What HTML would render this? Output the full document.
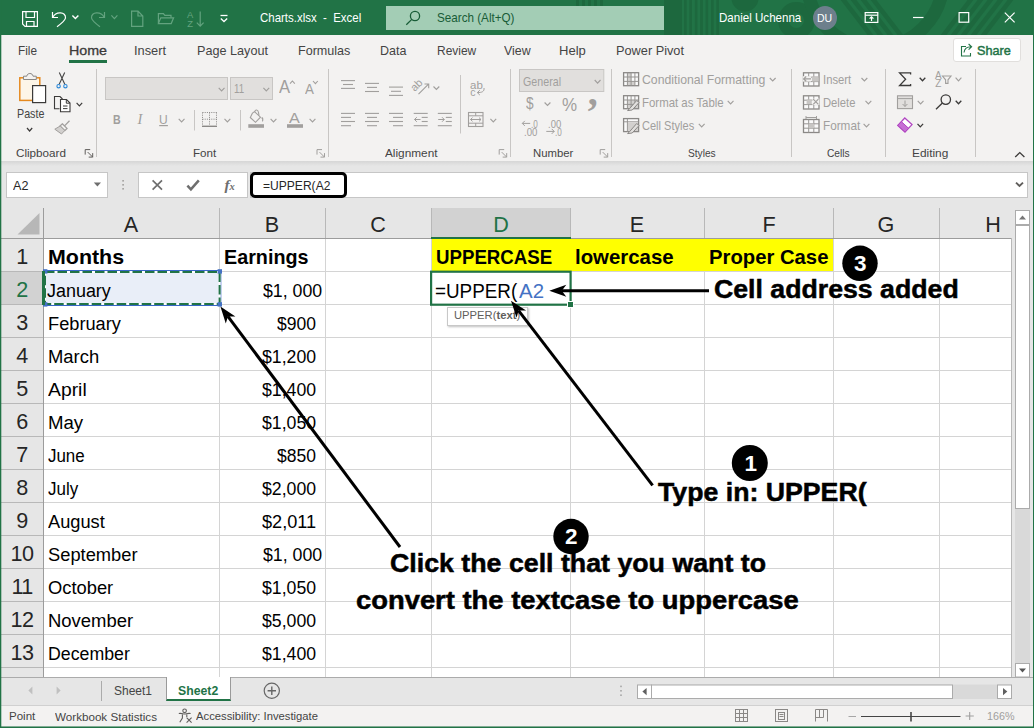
<!DOCTYPE html>
<html lang="en"><head><meta charset="utf-8"><title>Charts.xlsx - Excel</title>
<style>
html,body{margin:0;padding:0;background:#fff;}
body{width:1034px;height:728px;overflow:hidden;font-family:"Liberation Sans",sans-serif;}
#app{position:relative;width:1034px;height:728px;overflow:hidden;background:#f3f2f1;}
.t{position:absolute;white-space:nowrap;line-height:1;display:block;}
.ov{position:absolute;left:0;top:0;overflow:visible;pointer-events:none;}
.titlebar{position:absolute;left:0;top:0;width:1034px;height:35px;background:#217346;}
.search{position:absolute;left:386px;top:6px;width:278px;height:24px;background:#a3cdb5;}
.avatar{position:absolute;left:813px;top:6px;width:24px;height:24px;border-radius:50%;background:#6d7f8c;}
.tabs{position:absolute;left:0;top:0;width:1034px;height:0;}
.homeul{position:absolute;left:69px;top:60px;width:38px;height:3px;background:#217346;}
.share{position:absolute;left:953px;top:38px;width:66px;height:22px;background:#fff;border:1px solid #e1dfdd;border-radius:3px;}
.ribbon{position:absolute;left:0;top:0;width:1034px;height:0;}
.shadow{position:absolute;left:0;top:161px;width:1034px;height:5px;background:linear-gradient(#d6d6d6,#e6e6e6);}
.fbarbg{position:absolute;left:0;top:166px;width:1034px;height:42px;background:#e6e6e6;}
.fbar{position:absolute;left:0;top:0;width:1034px;height:0;}
.namebox{position:absolute;left:6px;top:172px;width:100px;height:24px;background:#fff;border:1px solid #c6c6c6;box-sizing:content-box;}
.fbtns{position:absolute;left:138px;top:172px;width:108px;height:24px;background:#fff;border:1px solid #c6c6c6;}
.finput{position:absolute;left:250px;top:172px;width:776px;height:24px;background:#fff;border:1px solid #c6c6c6;}
.fblack{position:absolute;left:250px;top:172px;width:91px;height:20px;background:#fff;border:3px solid #000;border-radius:5px;}
.grid{position:absolute;left:0;top:0;width:1034px;height:0;}
.tip{position:absolute;left:447px;top:307px;width:79px;height:17px;background:#fff;border:1px solid #c8c8c8;box-shadow:1px 1px 2px rgba(0,0,0,.25);}
.sheetbg{position:absolute;left:0;top:677px;width:1034px;height:28px;background:#e6e6e6;border-top:1px solid #ababab;box-sizing:border-box;}
.sheetbar{position:absolute;left:0;top:0;width:1034px;height:0;}
.tab2{position:absolute;left:166px;top:677px;width:63px;height:22px;background:#fff;border-left:1px solid #9a9a9a;border-right:1px solid #9a9a9a;border-bottom:2.5px solid #217346;}
.statusbg{position:absolute;left:0;top:705px;width:1034px;height:23px;background:#f3f2f1;border-top:1px solid #d0d0d0;box-sizing:border-box;}
.status{position:absolute;left:0;top:0;width:1034px;height:0;}
.anno{position:absolute;left:0;top:0;width:1034px;height:0;}
.an{-webkit-text-stroke:0.5px #000;}
.frame{position:absolute;left:0;top:0;width:1032px;height:727px;border:1px solid #217346;border-top:none;pointer-events:none;box-shadow:inset 0 -1px 0 rgba(33,115,70,.55), inset 1px 0 0 rgba(33,115,70,.3);}
</style></head>
<body><div id="app">
<div class="titlebar">
<svg class="ov" style="overflow:hidden" width="1034" height="35" viewBox="0 0 1034 35">
<g fill="#1d683e">
<rect x="664" y="0" width="18" height="35"/>
<rect x="684" y="0" width="2.6" height="35"/><rect x="689.4" y="0" width="2.6" height="35"/><rect x="694.8" y="0" width="2.6" height="35"/><rect x="700.2" y="0" width="2.6" height="35"/><rect x="705.6" y="0" width="2.6" height="35"/><rect x="711" y="0" width="2.6" height="35"/><rect x="716.4" y="0" width="2.6" height="35"/>
<rect x="576" y="0" width="3" height="6"/><rect x="582" y="0" width="3" height="6"/><rect x="588" y="0" width="3" height="6"/><rect x="594" y="0" width="3" height="6"/><rect x="600" y="0" width="3" height="6"/>
<circle cx="745" cy="-2" r="13.6"/>
</g>
<g fill="none" stroke="#1d683e">
<circle cx="796.4" cy="20.4" r="13" stroke-width="10.7"/>
<circle cx="875" cy="-20" r="68" stroke-width="13"/>
<path d="M842 -2 L872 37 M852 -2 L882 37 M862 -2 L892 37 M872 -2 L902 37" stroke-width="4.6"/>
<path d="M972 -2 L942 37 M982 -2 L952 37 M992 -2 L962 37 M1002 -2 L972 37 M1012 -2 L982 37" stroke-width="4.6"/>
</g>
</svg>
<div class="search"></div>
<div class="avatar"></div>
<svg class="ov" width="1034" height="35" viewBox="0 0 1034 35" fill="none" stroke-linejoin="miter">
<g stroke="#ffffff" stroke-width="1.2">
<path d="M22.6 11.6 H37.4 V26.4 H25 L22.6 24 Z"/>
<path d="M26 11.6 V17.5 H34.5 V11.6"/>
<path d="M26.5 26.4 V21.5 H34 V26.4"/>
<path d="M52.5 12 V17.5 H58"/>
<path d="M52.8 17.2 C56 11 66 11.5 65.5 18 C65.3 20.5 62 23 57 26.8"/>
</g>
<path d="M72.4 15.4 L75.4 18.6 L78.4 15.4" fill="none" stroke="#ffffff" stroke-width="1.4"/>
<g stroke="#63a37f" stroke-width="1.2">
<path d="M104.5 12 V17.5 H99"/>
<path d="M104.2 17.2 C101 11 91 11.5 91.5 18 C91.7 20.5 95 23 100 26.8"/>
<path d="M131.6 11.2 H138 L142.8 16 V26.4 H131.6 Z M138 11.2 V16 H142.8"/>
<path d="M158.4 23 V13.6 H163.4 L164.8 15.4 H171 V17.6"/>
<path d="M158.4 23.6 L160.8 17.8 H173.6 L171.2 23.6 Z"/>
<path d="M200.2 11.4 V26 M196.8 22.6 L200.2 26.2 L203.6 22.6"/>
</g>
<path d="M111.4 15.4 L114.4 18.6 L117.4 15.4" fill="none" stroke="#63a37f" stroke-width="1.2"/>
<path d="M220.5 15.5 H227.5" stroke="#ffffff" stroke-width="1.3"/>
<path d="M220.8 18.5 L224 21.5 L227.2 18.5" stroke="#ffffff" stroke-width="1.3"/>
<circle cx="415" cy="16" r="4.6" stroke="#185c37" stroke-width="1.3"/>
<path d="M411.8 19.4 L406.3 24.8" stroke="#185c37" stroke-width="1.3"/>
<g stroke="#ffffff" stroke-width="1.2">
<rect x="865.2" y="12.6" width="12.6" height="9.8"/>
<path d="M865.2 15.2 H877.8" />
<path d="M871.5 21 V17 M869.6 18.6 L871.5 16.8 L873.4 18.6"/>
<path d="M913 17.5 H923.5"/>
<rect x="959.1" y="12.6" width="9.6" height="9.6"/>
<path d="M1004.8 12.6 L1014.6 22.4 M1014.6 12.6 L1004.8 22.4"/>
</g>
</svg>
<span id="t1" class="t" style="top:10.34px;font-size:9.4px;color:#63a37f;left:187.00px;transform-origin:0 50%;">A</span>
<span id="t2" class="t" style="top:19.14px;font-size:9.4px;color:#63a37f;left:187.30px;transform-origin:0 50%;">Z</span>
<span id="t3" class="t" style="top:11.95px;font-size:12.7px;color:#fff;left:259.80px;transform-origin:0 50%;transform:scaleX(0.9028);">Charts.xlsx&nbsp; -&nbsp; Excel</span>
<span id="t4" class="t" style="top:11.95px;font-size:12.7px;color:#185c37;left:436.50px;transform-origin:0 50%;transform:scaleX(0.9197);">Search (Alt+Q)</span>
<span id="t5" class="t" style="top:11.95px;font-size:12.7px;color:#fff;left:719.30px;transform-origin:0 50%;transform:scaleX(0.9116);">Daniel Uchenna</span>
<span id="t6" class="t" style="top:13.22px;font-size:11.2px;color:#fff;left:817.20px;transform-origin:0 50%;transform:scaleX(0.9399);">DU</span>
</div>
<div class="tabs">
<span id="t7" class="t" style="top:44.75px;font-size:12.7px;color:#444444;left:18.00px;transform-origin:0 50%;transform:scaleX(0.9290);">File</span>
<span id="t8" class="t" style="top:44.75px;font-size:12.7px;color:#444444;left:134.00px;transform-origin:0 50%;transform:scaleX(1.0084);">Insert</span>
<span id="t9" class="t" style="top:44.75px;font-size:12.7px;color:#444444;left:197.00px;transform-origin:0 50%;transform:scaleX(0.9965);">Page Layout</span>
<span id="t10" class="t" style="top:44.75px;font-size:12.7px;color:#444444;left:298.00px;transform-origin:0 50%;transform:scaleX(0.9910);">Formulas</span>
<span id="t11" class="t" style="top:44.75px;font-size:12.7px;color:#444444;left:380.30px;transform-origin:0 50%;transform:scaleX(0.9846);">Data</span>
<span id="t12" class="t" style="top:44.75px;font-size:12.7px;color:#444444;left:436.50px;transform-origin:0 50%;transform:scaleX(0.9421);">Review</span>
<span id="t13" class="t" style="top:44.75px;font-size:12.7px;color:#444444;left:504.40px;transform-origin:0 50%;transform:scaleX(0.9750);">View</span>
<span id="t14" class="t" style="top:44.75px;font-size:12.7px;color:#444444;left:558.80px;transform-origin:0 50%;transform:scaleX(1.0271);">Help</span>
<span id="t15" class="t" style="top:44.75px;font-size:12.7px;color:#444444;left:616.00px;transform-origin:0 50%;transform:scaleX(1.0044);">Power Pivot</span>
<span id="t16" class="t" style="top:44.58px;font-size:12.9px;color:#3b3a39;left:69.00px;transform-origin:0 50%;transform:scaleX(1.1050);-webkit-text-stroke:0.3px #3b3a39;">Home</span>
<div class="homeul"></div>
<div class="share"></div>
<svg class="ov" style="top:0" width="1034" height="70" viewBox="0 0 1034 70" fill="none" stroke="#217346" stroke-width="1.1">
<path d="M966 46.5 H961.5 V56 H970.5 V53"/>
<path d="M964 52.5 C964.5 48.5 967 46.8 971 46.8 M968.6 44 L971.6 46.8 L968.6 49.6"/>
</svg>
<span id="t17" class="t" style="top:44.75px;font-size:12.7px;color:#217346;left:977.00px;transform-origin:0 50%;transform:scaleX(0.9982);-webkit-text-stroke:0.45px #217346;">Share</span>
</div>
<div class="ribbon">
<svg class="ov" style="top:0" width="1034" height="170" viewBox="0 0 1034 170"><path d="M96.5 69 V157" stroke="#c8c6c4" stroke-width="1"/>
<path d="M328.5 69 V157" stroke="#c8c6c4" stroke-width="1"/>
<path d="M510.5 69 V157" stroke="#c8c6c4" stroke-width="1"/>
<path d="M611.5 69 V157" stroke="#c8c6c4" stroke-width="1"/>
<path d="M791.5 69 V157" stroke="#c8c6c4" stroke-width="1"/>
<path d="M885.5 69 V157" stroke="#c8c6c4" stroke-width="1"/>
<path d="M975.5 69 V157" stroke="#c8c6c4" stroke-width="1"/>
<path d="M460.5 75 V133.5" stroke="#c8c6c4"/>
<path d="M194.5 110 V130.5 M240.5 110 V130.5" stroke="#c8c6c4"/>
<rect x="19.8" y="77.8" width="20" height="22.6" fill="#fdf6e8" stroke="#e5891f" stroke-width="1.5"/>
<path d="M23.5 79.5 V76.2 H26.8 C27 72.6 32.8 72.6 33 76.2 H36.3 V79.5 Z" fill="#f3f2f1" stroke="#8a8886" stroke-width="1"/>
<rect x="32.6" y="85.6" width="13" height="17" fill="#fff" stroke="#3b3a39" stroke-width="1.2"/>
<path d="M27.0 128.0 L29.6 131.0 L32.2 128.0" fill="none" stroke="#3b3a39" stroke-width="1.2"/>
<path d="M59.3 72.5 L64.8 84.3 M64.7 72.5 L59.2 84.3" stroke="#444" stroke-width="1.1" fill="none"/>
<circle cx="58.6" cy="86.2" r="1.7" fill="none" stroke="#2b88d8" stroke-width="1.1"/><circle cx="65.4" cy="86.2" r="1.7" fill="none" stroke="#2b88d8" stroke-width="1.1"/>
<path d="M59.5 108.8 H54.5 V96.5 H60 L62.5 99" fill="none" stroke="#3b3a39" stroke-width="1.1"/>
<path d="M60.5 99.5 H66.5 L70 103 V111.8 H60.5 Z" fill="#fff" stroke="#3b3a39" stroke-width="1.1"/>
<path d="M66.3 99.8 V103.2 H69.8 M63 106 H67.5 M63 108.6 H67.5" fill="none" stroke="#3b3a39" stroke-width="1"/>
<path d="M76.6 102.9 L79.4 105.9 L82.2 102.9" fill="none" stroke="#3b3a39" stroke-width="1.2"/>
<path d="M69.5 120.8 L64.8 125.6 M62.3 123.8 L67 128.4 L64.8 130.6 L60 126 Z" fill="none" stroke="#a19f9d" stroke-width="1.3"/>
<path d="M60.2 126 L54.8 129.2 L61.5 134 L64.8 130.4 Z" fill="#d2d0ce" stroke="#a19f9d" stroke-width="1"/>
<path d="M85.2 154.6 V149.6 H90.2" fill="none" stroke="#605e5c" stroke-width="1"/><path d="M87.7 152.1 L92.7 157.1 M92.7 153.1 V157.1 H88.7" fill="none" stroke="#605e5c" stroke-width="1"/>
<rect x="105.5" y="77.5" width="122" height="22" fill="#e1dfdd" stroke="#c8c6c4"/>
<rect x="230.5" y="77.5" width="42" height="22" fill="#e1dfdd" stroke="#c8c6c4"/>
<path d="M218.7 87.8 L221.6 90.8 L224.5 87.8" fill="none" stroke="#a19f9d" stroke-width="1.15"/>
<path d="M263.4 87.8 L266.3 90.8 L269.2 87.8" fill="none" stroke="#a19f9d" stroke-width="1.15"/>
<path d="M290 83.6 L292.4 81 L294.8 83.6" fill="none" stroke="#a19f9d" stroke-width="1.1"/>
<path d="M313 81 L315.4 83.6 L317.8 81" fill="none" stroke="#a19f9d" stroke-width="1.1"/>
<path d="M159.2 125.6 H167.9" stroke="#a19f9d" stroke-width="1.2"/>
<path d="M178.7 118.8 L181.6 121.8 L184.5 118.8" fill="none" stroke="#a19f9d" stroke-width="1.15"/>
<path d="M224.5 118.8 L227.4 121.8 L230.3 118.8" fill="none" stroke="#a19f9d" stroke-width="1.15"/>
<path d="M270.6 118.8 L273.5 121.8 L276.4 118.8" fill="none" stroke="#a19f9d" stroke-width="1.15"/>
<path d="M309.6 118.8 L312.5 121.8 L315.4 118.8" fill="none" stroke="#a19f9d" stroke-width="1.15"/>
<path d="M202.5 112.5 H217 M202.5 119.2 H217 M202.5 112.5 V125 M216.5 112.5 V125 M209.5 112.5 V125" fill="none" stroke="#8a8886" stroke-width="1" stroke-dasharray="1 1.2"/>
<path d="M202 126.3 H217" stroke="#8a8886" stroke-width="1.4"/>
<path d="M252.5 113 L250.3 117.5 L255.5 122.3 L260.5 117.2 L254.5 111.6 Z" fill="none" stroke="#a19f9d" stroke-width="1.1"/>
<path d="M254.6 111.8 C255.5 109 258 109.5 258.5 112.5 L259 115.6" fill="none" stroke="#a19f9d" stroke-width="1.1"/>
<path d="M261.6 118.5 C262.8 116 263 120.5 262.4 121.4" fill="none" stroke="#a19f9d" stroke-width="1.2"/>
<rect x="248.3" y="124.2" width="15.7" height="3.6" fill="#a19f9d"/>
<rect x="287" y="124.2" width="16" height="3.6" fill="#a19f9d"/>
<path d="M317 154.6 V149.6 H322" fill="none" stroke="#a19f9d" stroke-width="1"/><path d="M319.5 152.1 L324.5 157.1 M324.5 153.1 V157.1 H320.5" fill="none" stroke="#a19f9d" stroke-width="1"/>
<path d="M341 80.6 H355" stroke="#a19f9d" stroke-width="1.1"/><path d="M343 84.5 H353" stroke="#a19f9d" stroke-width="1.1"/><path d="M341 88.4 H355" stroke="#a19f9d" stroke-width="1.1"/>
<path d="M365 83.4 H379" stroke="#a19f9d" stroke-width="1.1"/><path d="M367 87.4 H377" stroke="#a19f9d" stroke-width="1.1"/><path d="M365 91.5 H379" stroke="#a19f9d" stroke-width="1.1"/>
<path d="M389 87.1 H403" stroke="#a19f9d" stroke-width="1.1"/><path d="M391 91.3 H401" stroke="#a19f9d" stroke-width="1.1"/><path d="M389 95.4 H403" stroke="#a19f9d" stroke-width="1.1"/>
<path d="M341 113.4 H355" stroke="#a19f9d" stroke-width="1.1"/><path d="M341 117.4 H351" stroke="#a19f9d" stroke-width="1.1"/><path d="M341 121.5 H355" stroke="#a19f9d" stroke-width="1.1"/><path d="M341 125.7 H351" stroke="#a19f9d" stroke-width="1.1"/>
<path d="M365 113.4 H379" stroke="#a19f9d" stroke-width="1.1"/><path d="M367 117.4 H377" stroke="#a19f9d" stroke-width="1.1"/><path d="M365 121.5 H379" stroke="#a19f9d" stroke-width="1.1"/><path d="M367 125.7 H377" stroke="#a19f9d" stroke-width="1.1"/>
<path d="M389 113.4 H403" stroke="#a19f9d" stroke-width="1.1"/><path d="M393 117.4 H403" stroke="#a19f9d" stroke-width="1.1"/><path d="M389 121.5 H403" stroke="#a19f9d" stroke-width="1.1"/><path d="M393 125.7 H403" stroke="#a19f9d" stroke-width="1.1"/>
<path d="M413.7 113.4 H427.7" stroke="#a19f9d" stroke-width="1.1"/><path d="M421.7 117.4 H427.7" stroke="#a19f9d" stroke-width="1.1"/><path d="M421.7 121.5 H427.7" stroke="#a19f9d" stroke-width="1.1"/><path d="M413.7 125.7 H427.7" stroke="#a19f9d" stroke-width="1.1"/>
<path d="M414.5 119.5 H420.5 M416.8 117.2 L414.5 119.5 L416.8 121.8" fill="none" stroke="#a19f9d" stroke-width="1"/>
<path d="M437.8 113.4 H451.8" stroke="#a19f9d" stroke-width="1.1"/><path d="M445.8 117.4 H451.8" stroke="#a19f9d" stroke-width="1.1"/><path d="M445.8 121.5 H451.8" stroke="#a19f9d" stroke-width="1.1"/><path d="M437.8 125.7 H451.8" stroke="#a19f9d" stroke-width="1.1"/>
<path d="M438.2 119.5 H444.2 M442 117.2 L444.3 119.5 L442 121.8" fill="none" stroke="#a19f9d" stroke-width="1"/>
<path d="M418.5 94.2 L428.5 84.2 M424.5 84 H428.7 V88.2" fill="none" stroke="#a19f9d" stroke-width="1.1"/>
<path d="M433.5 86.5 L436.4 89.5 L439.3 86.5" fill="none" stroke="#a19f9d" stroke-width="1.15"/>
<path d="M484 88 C484.5 91.5 482 92.6 477.5 92.6 M479.8 90.2 L477.3 92.6 L479.8 95" fill="none" stroke="#a19f9d" stroke-width="1"/>
<rect x="468.5" y="112.5" width="14.5" height="14" fill="none" stroke="#a19f9d" stroke-width="1.1"/>
<path d="M468.5 115.8 H483 M468.5 123.2 H483 M475.7 112.5 V115.8 M475.7 123.2 V126.5 M470.5 119.5 H481 M472.5 117.6 L470.5 119.5 L472.5 121.4 M479 117.6 L481 119.5 L479 121.4" fill="none" stroke="#a19f9d" stroke-width="1"/>
<path d="M490.4 118.8 L493.3 121.8 L496.2 118.8" fill="none" stroke="#a19f9d" stroke-width="1.15"/>
<path d="M499.2 154.6 V149.6 H504.2" fill="none" stroke="#a19f9d" stroke-width="1"/><path d="M501.7 152.1 L506.7 157.1 M506.7 153.1 V157.1 H502.7" fill="none" stroke="#a19f9d" stroke-width="1"/>
<rect x="519.5" y="69.5" width="84.3" height="22" fill="#e1dfdd" stroke="#c8c6c4"/>
<path d="M594.7 80.0 L597.6 83.1 L600.5 80.0" fill="none" stroke="#a19f9d" stroke-width="1.15"/>
<path d="M544.6 102.5 L547.5 105.5 L550.4 102.5" fill="none" stroke="#a19f9d" stroke-width="1.15"/>
<path d="M530.2 123.4 H522.3 M524.8 120.9 L522.3 123.4 L524.8 125.9" fill="none" stroke="#a19f9d" stroke-width="1"/>
<path d="M546.3 131.4 H554.2 M551.7 128.9 L554.2 131.4 L551.7 133.9" fill="none" stroke="#a19f9d" stroke-width="1"/>
<path d="M600.2 154.6 V149.6 H605.2" fill="none" stroke="#a19f9d" stroke-width="1"/><path d="M602.7 152.1 L607.7 157.1 M607.7 153.1 V157.1 H603.7" fill="none" stroke="#a19f9d" stroke-width="1"/>
<rect x="623.6" y="72.7" width="15" height="13" fill="#fafafa"/>
<rect x="627.4" y="72.7" width="3.8" height="8.7" fill="#d2d0ce"/><rect x="627.4" y="81.4" width="7.5" height="4.3" fill="#d2d0ce"/>
<rect x="623.6" y="72.7" width="15" height="13" fill="none" stroke="#8a8886" stroke-width="1.3"/><path d="M623.6 77.0 H638.6 M623.6 81.4 H638.6 M627.4 72.7 V85.7 M631.1 72.7 V85.7 M634.9 72.7 V85.7 " stroke="#979593" stroke-width="1" fill="none"/>
<rect x="623.6" y="95.7" width="15" height="13" fill="#fafafa"/>
<rect x="627.4" y="100" width="11" height="8.6" fill="#d2d0ce"/>
<rect x="623.6" y="95.7" width="15" height="13" fill="none" stroke="#8a8886" stroke-width="1.3"/><path d="M623.6 100.0 H638.6 M623.6 104.4 H638.6 M627.4 95.7 V108.7 M631.1 95.7 V108.7 M634.9 95.7 V108.7 " stroke="#979593" stroke-width="1" fill="none"/>
<path d="M629.6 108.6 L636.6 100.6 L639.2 102.4 L632.2 110 L627.6 110.6 Z" fill="#e1dfdd" stroke="#8a8886" stroke-width="1"/>
<rect x="623.6" y="118.6" width="15" height="13" fill="#fafafa" stroke="#8a8886" stroke-width="1.3"/><path d="M623.6 121.8 H638.6 M627.4 118.6 V131.6" stroke="#979593" fill="none"/><rect x="628" y="122.4" width="10" height="8.6" fill="#d2d0ce"/>
<path d="M629.6 131.6 L636.6 123.6 L639.2 125.4 L632.2 133 L627.6 133.6 Z" fill="#e1dfdd" stroke="#8a8886" stroke-width="1"/>
<path d="M769.8 78.0 L772.7 81.0 L775.6 78.0" fill="none" stroke="#a19f9d" stroke-width="1.15"/>
<path d="M727.7 100.8 L730.6 103.8 L733.5 100.8" fill="none" stroke="#a19f9d" stroke-width="1.15"/>
<path d="M698.8 123.9 L701.7 127.0 L704.6 123.9" fill="none" stroke="#a19f9d" stroke-width="1.15"/>
<rect x="803.5" y="72.8" width="15.5" height="13.2" fill="#fafafa" stroke="#8a8886" stroke-width="1.3"/><path d="M803.5 77.2 H819.0 M803.5 81.6 H819.0 M808.7 72.8 V86.0 M813.8 72.8 V86.0 " stroke="#979593" stroke-width="1" fill="none"/>
<rect x="811.8" y="76.4" width="6.8" height="5.2" fill="#c8c6c4"/><rect x="803" y="76.2" width="8" height="5.4" fill="#f3f2f1"/><path d="M811 78.9 H803.6 M806.2 76.5 L803.6 78.9 L806.2 81.3" stroke="#a19f9d" stroke-width="1.2" fill="none"/>
<rect x="803.5" y="95.8" width="15.5" height="13.2" fill="#fafafa" stroke="#8a8886" stroke-width="1.3"/><path d="M803.5 100.2 H819.0 M803.5 104.6 H819.0 M808.7 95.8 V109.0 M813.8 95.8 V109.0 " stroke="#979593" stroke-width="1" fill="none"/>
<rect x="806.6" y="99.4" width="5.2" height="4.8" fill="#c8c6c4"/><rect x="812.4" y="98.6" width="7" height="6.4" fill="#f3f2f1"/><path d="M813.2 99.2 L818.4 104.4 M818.4 99.2 L813.2 104.4" stroke="#a19f9d" stroke-width="1.2" fill="none"/>
<rect x="803.5" y="119.5" width="15.5" height="13" fill="#fafafa" stroke="#8a8886" stroke-width="1.3"/><path d="M803.5 123.8 H819.0 M803.5 128.2 H819.0 M808.7 119.5 V132.5 M813.8 119.5 V132.5 " stroke="#979593" stroke-width="1" fill="none"/>
<rect x="808.6" y="123.6" width="5.4" height="4.6" fill="#c8c6c4"/><path d="M806 117.5 H816.5 M806 116 V119 M816.5 116 V119" stroke="#a19f9d" fill="none"/>
<path d="M861.5 78.0 L864.4 81.0 L867.3 78.0" fill="none" stroke="#a19f9d" stroke-width="1.15"/>
<path d="M865.5 100.8 L868.4 103.8 L871.3 100.8" fill="none" stroke="#a19f9d" stroke-width="1.15"/>
<path d="M863.6 123.9 L866.5 127.0 L869.4 123.9" fill="none" stroke="#a19f9d" stroke-width="1.15"/>
<path d="M910.6 74.5 V72.9 H899.6 L905.6 79.2 L899.6 85.5 H910.6 V83.9" fill="none" stroke="#3b3a39" stroke-width="1.3"/>
<path d="M919.7 77.7 L922.5 80.7 L925.3 77.7" fill="none" stroke="#3b3a39" stroke-width="1.3"/>
<rect x="897.5" y="95.8" width="15" height="12.8" fill="#e1dfdd" stroke="#a19f9d" stroke-width="1.1"/><path d="M897.5 98.6 H912.5 M905 100.5 V106.4 M902.6 104 L905 106.5 L907.4 104" stroke="#a19f9d" fill="none"/>
<path d="M917.7 100.8 L920.6 103.8 L923.5 100.8" fill="none" stroke="#a19f9d" stroke-width="1.15"/>
<path d="M904.8 118 L912 124.6 L905 132 L897.8 125.4 Z" fill="#fff" stroke="#b146c2" stroke-width="1.3"/>
<path d="M901.3 121.6 L908.6 128.3 L905 132 L897.8 125.4 Z" fill="#c66fd4" stroke="#b146c2" stroke-width="1"/>
<path d="M917.5 123.9 L920.3 126.9 L923.1 123.9" fill="none" stroke="#3b3a39" stroke-width="1.3"/>
<path d="M942.5 76 H951 L948 79.8 V83.4 H945.6 V79.8 Z" fill="none" stroke="#a19f9d" stroke-width="1.1"/>
<path d="M955.6 77.7 L958.5 80.8 L961.4 77.7" fill="none" stroke="#a19f9d" stroke-width="1.15"/>
<circle cx="945.8" cy="99.6" r="4.7" fill="none" stroke="#3b3a39" stroke-width="1.3"/><path d="M942.4 103 L936 109.2" stroke="#3b3a39" stroke-width="1.3"/>
<path d="M955.7 100.8 L958.5 103.8 L961.3 100.8" fill="none" stroke="#3b3a39" stroke-width="1.3"/>
<path d="M1015.2 157 L1019.8 152.6 L1024.4 157" fill="none" stroke="#3b3a39" stroke-width="1.3"/></svg>
<span id="t18" class="t" style="top:108.07px;font-size:12.2px;color:#444444;left:16.60px;transform-origin:0 50%;transform:scaleX(0.8790);">Paste</span>
<span id="t19" class="t" style="top:148.42px;font-size:11.2px;color:#444444;left:15.60px;transform-origin:0 50%;transform:scaleX(1.0440);">Clipboard</span>
<span id="t20" class="t" style="top:148.42px;font-size:11.2px;color:#444444;left:192.80px;transform-origin:0 50%;transform:scaleX(1.0361);">Font</span>
<span id="t21" class="t" style="top:148.42px;font-size:11.2px;color:#444444;left:385.30px;transform-origin:0 50%;transform:scaleX(1.0553);">Alignment</span>
<span id="t22" class="t" style="top:148.42px;font-size:11.2px;color:#444444;left:532.70px;transform-origin:0 50%;transform:scaleX(1.0126);">Number</span>
<span id="t23" class="t" style="top:148.42px;font-size:11.2px;color:#444444;left:687.70px;transform-origin:0 50%;transform:scaleX(0.9091);">Styles</span>
<span id="t24" class="t" style="top:148.42px;font-size:11.2px;color:#444444;left:826.80px;transform-origin:0 50%;transform:scaleX(0.9126);">Cells</span>
<span id="t25" class="t" style="top:148.42px;font-size:11.2px;color:#444444;left:912.40px;transform-origin:0 50%;transform:scaleX(1.0608);">Editing</span>
<span id="t26" class="t" style="top:82.87px;font-size:12.2px;color:#a19f9d;left:233.90px;transform-origin:0 50%;transform:scaleX(0.7980);">11</span>
<span id="t27" class="t" style="top:78.29px;font-size:18.2px;color:#a19f9d;left:278.90px;transform-origin:0 50%;transform:scaleX(0.9143);">A</span>
<span id="t28" class="t" style="top:81.68px;font-size:14.2px;color:#a19f9d;left:304.60px;transform-origin:0 50%;transform:scaleX(0.9399);">A</span>
<span id="t29" class="t" style="top:113.03px;font-size:13.2px;color:#a19f9d;font-weight:700;left:112.60px;transform-origin:0 50%;transform:scaleX(0.8079);">B</span>
<span id="t30" class="t" style="top:111.93px;font-size:14.5px;color:#a19f9d;font-style:italic;left:137.60px;transform-origin:0 50%;font-family:'Liberation Serif',serif;">I</span>
<span id="t31" class="t" style="top:112.93px;font-size:13.2px;color:#a19f9d;left:159.20px;transform-origin:0 50%;transform:scaleX(0.9128);">U</span>
<span id="t32" class="t" style="top:111.48px;font-size:14.2px;color:#a19f9d;left:289.40px;transform-origin:0 50%;transform:scaleX(1.1406);">A</span>
<span id="t33" class="t" style="top:82.59px;font-size:11px;color:#a19f9d;left:415.00px;transform-origin:0 50%;transform:rotate(-45deg);transform-origin:0 9.31px;">ab</span>
<span id="t34" class="t" style="top:80.11px;font-size:10.5px;color:#a19f9d;left:470.30px;transform-origin:0 50%;transform:scaleX(1.0952);">ab</span>
<span id="t35" class="t" style="top:87.21px;font-size:10.5px;color:#a19f9d;left:470.30px;transform-origin:0 50%;">c</span>
<span id="t36" class="t" style="top:75.67px;font-size:12.2px;color:#a19f9d;left:523.00px;transform-origin:0 50%;transform:scaleX(0.8764);">General</span>
<span id="t37" class="t" style="top:95.11px;font-size:17px;color:#a19f9d;left:525.60px;transform-origin:0 50%;transform:scaleX(0.8026);">$</span>
<span id="t38" class="t" style="top:95.89px;font-size:18.2px;color:#a19f9d;left:561.50px;transform-origin:0 50%;transform:scaleX(0.9337);">%</span>
<span id="t39" class="t" style="top:72.34px;font-size:40px;color:#a19f9d;font-weight:700;left:587.80px;transform-origin:0 50%;font-family:'Liberation Serif',serif;">,</span>
<span id="t40" class="t" style="top:118.63px;font-size:10.6px;color:#a19f9d;left:531.00px;transform-origin:0 50%;transform:scaleX(0.7689);">.0</span>
<span id="t41" class="t" style="top:126.53px;font-size:10.6px;color:#a19f9d;left:524.20px;transform-origin:0 50%;transform:scaleX(0.9094);">.00</span>
<span id="t42" class="t" style="top:118.63px;font-size:10.6px;color:#a19f9d;left:548.40px;transform-origin:0 50%;transform:scaleX(0.8959);">.00</span>
<span id="t43" class="t" style="top:126.53px;font-size:10.6px;color:#a19f9d;left:554.80px;transform-origin:0 50%;transform:scaleX(0.7689);">.0</span>
<span id="t44" class="t" style="top:74.17px;font-size:12.2px;color:#a19f9d;left:642.30px;transform-origin:0 50%;transform:scaleX(1.0055);">Conditional Formatting</span>
<span id="t45" class="t" style="top:97.27px;font-size:12.2px;color:#a19f9d;left:642.30px;transform-origin:0 50%;transform:scaleX(0.9374);">Format as Table</span>
<span id="t46" class="t" style="top:120.37px;font-size:12.2px;color:#a19f9d;left:642.30px;transform-origin:0 50%;transform:scaleX(0.9066);">Cell Styles</span>
<span id="t47" class="t" style="top:74.17px;font-size:12.2px;color:#a19f9d;left:822.50px;transform-origin:0 50%;transform:scaleX(0.9251);">Insert</span>
<span id="t48" class="t" style="top:97.27px;font-size:12.2px;color:#a19f9d;left:822.50px;transform-origin:0 50%;transform:scaleX(0.9224);">Delete</span>
<span id="t49" class="t" style="top:120.37px;font-size:12.2px;color:#a19f9d;left:822.50px;transform-origin:0 50%;transform:scaleX(0.9635);">Format</span>
<span id="t50" class="t" style="top:70.83px;font-size:10px;color:#a19f9d;left:935.00px;transform-origin:0 50%;">A</span>
<span id="t51" class="t" style="top:79.03px;font-size:10px;color:#a19f9d;left:935.20px;transform-origin:0 50%;">Z</span>
</div>
<div class="shadow"></div><div class="fbarbg"></div>
<div class="fbar">
<div class="namebox"></div><div class="fbtns"></div><div class="finput"></div><div class="fblack"></div>
<svg class="ov" style="top:0" width="1034" height="210" viewBox="0 0 1034 210" fill="none">
<path d="M93.8 182.6 L97.4 186.4 L101 182.6 Z" fill="#6e6e6e"/>
<g fill="#a19f9d"><rect x="122.3" y="180" width="1.6" height="1.6"/><rect x="122.3" y="184" width="1.6" height="1.6"/><rect x="122.3" y="188" width="1.6" height="1.6"/></g>
<path d="M152.6 180.3 L162 189.7 M162 180.3 L152.6 189.7" stroke="#6e6e6e" stroke-width="1.7"/>
<path d="M187.4 185.6 L190.9 189.3 L198.8 180.4" stroke="#6e6e6e" stroke-width="2.5"/>
<path d="M1016 182.6 L1019.5 186 L1023 182.6" stroke="#605e5c" stroke-width="1.9"/>
</svg>
<span id="t52" class="t" style="top:179.40px;font-size:13px;color:#262626;left:13.20px;transform-origin:0 50%;transform:scaleX(0.9682);">A2</span>
<span id="t53" class="t" style="top:177.38px;font-size:15.5px;color:#6e6e6e;font-weight:700;font-style:italic;left:224.40px;transform-origin:0 50%;font-family:'Liberation Serif',serif;">f</span>
<span id="t54" class="t" style="top:182.21px;font-size:10.5px;color:#6e6e6e;font-weight:700;font-style:italic;left:229.60px;transform-origin:0 50%;font-family:'Liberation Serif',serif;">x</span>
<span id="t55" class="t" style="top:179.40px;font-size:13px;color:#262626;left:263.40px;transform-origin:0 50%;transform:scaleX(0.9281);">=UPPER(A2</span>
</div>
<div class="sheetbg"></div><div class="statusbg"></div>
<div class="grid">
<svg class="ov" style="top:0" width="1034" height="728" viewBox="0 0 1034 728"><rect x="1" y="207" width="1033" height="470" fill="#e6e6e6"/>
<rect x="44" y="239" width="967" height="438" fill="#fff"/>
<rect x="432" y="208" width="138" height="29" fill="#d2d2d2"/>
<rect x="1" y="272" width="41" height="32" fill="#d2d2d2"/>
<rect x="431" y="239" width="402" height="32" fill="#ffff00"/>
<rect x="44" y="272" width="175" height="32" fill="#e9eef8"/>
<rect x="219" y="239" width="1" height="438" fill="#d4d4d4"/>
<rect x="325" y="239" width="1" height="438" fill="#d4d4d4"/>
<rect x="431" y="239" width="1" height="438" fill="#d4d4d4"/>
<rect x="570" y="239" width="1" height="438" fill="#d4d4d4"/>
<rect x="704" y="239" width="1" height="438" fill="#d4d4d4"/>
<rect x="833" y="239" width="1" height="438" fill="#d4d4d4"/>
<rect x="939" y="239" width="1" height="438" fill="#d4d4d4"/>
<rect x="44" y="271" width="967" height="1" fill="#d4d4d4"/>
<rect x="44" y="304" width="967" height="1" fill="#d4d4d4"/>
<rect x="44" y="337" width="967" height="1" fill="#d4d4d4"/>
<rect x="44" y="370" width="967" height="1" fill="#d4d4d4"/>
<rect x="44" y="403" width="967" height="1" fill="#d4d4d4"/>
<rect x="44" y="436" width="967" height="1" fill="#d4d4d4"/>
<rect x="44" y="469" width="967" height="1" fill="#d4d4d4"/>
<rect x="44" y="502" width="967" height="1" fill="#d4d4d4"/>
<rect x="44" y="535" width="967" height="1" fill="#d4d4d4"/>
<rect x="44" y="568" width="967" height="1" fill="#d4d4d4"/>
<rect x="44" y="601" width="967" height="1" fill="#d4d4d4"/>
<rect x="44" y="634" width="967" height="1" fill="#d4d4d4"/>
<rect x="44" y="667" width="967" height="1" fill="#d4d4d4"/>
<rect x="432" y="239" width="401" height="32" fill="#ffff00"/>
<rect x="219" y="208" width="1" height="30" fill="#b8b8b8"/>
<rect x="325" y="208" width="1" height="30" fill="#b8b8b8"/>
<rect x="431" y="208" width="1" height="30" fill="#b8b8b8"/>
<rect x="570" y="208" width="1" height="30" fill="#b8b8b8"/>
<rect x="704" y="208" width="1" height="30" fill="#b8b8b8"/>
<rect x="833" y="208" width="1" height="30" fill="#b8b8b8"/>
<rect x="939" y="208" width="1" height="30" fill="#b8b8b8"/>
<rect x="1" y="271" width="42" height="1" fill="#b8b8b8"/>
<rect x="1" y="304" width="42" height="1" fill="#b8b8b8"/>
<rect x="1" y="337" width="42" height="1" fill="#b8b8b8"/>
<rect x="1" y="370" width="42" height="1" fill="#b8b8b8"/>
<rect x="1" y="403" width="42" height="1" fill="#b8b8b8"/>
<rect x="1" y="436" width="42" height="1" fill="#b8b8b8"/>
<rect x="1" y="469" width="42" height="1" fill="#b8b8b8"/>
<rect x="1" y="502" width="42" height="1" fill="#b8b8b8"/>
<rect x="1" y="535" width="42" height="1" fill="#b8b8b8"/>
<rect x="1" y="568" width="42" height="1" fill="#b8b8b8"/>
<rect x="1" y="601" width="42" height="1" fill="#b8b8b8"/>
<rect x="1" y="634" width="42" height="1" fill="#b8b8b8"/>
<rect x="1" y="667" width="42" height="1" fill="#b8b8b8"/>
<rect x="1" y="238" width="1010" height="1" fill="#9c9c9c"/>
<rect x="43" y="208" width="1" height="469" fill="#9c9c9c"/>
<rect x="1011" y="238" width="1" height="439" fill="#b8b8b8"/>
<rect x="431" y="237" width="140" height="2" fill="#217346"/>
<rect x="42" y="271" width="2.2" height="34" fill="#217346"/>
<path d="M39.5 213 V234.5 H17.5 Z" fill="#b7b7b7"/>
<rect x="431.1" y="271.7" width="139.5" height="33" fill="#fff" stroke="#217346" stroke-width="2.2"/>
<rect x="567.5" y="301.5" width="6" height="6" fill="#217346" stroke="#fff" stroke-width="1"/>
<rect x="44.5" y="270.5" width="176.3" height="35" fill="none" stroke="#3866c8" stroke-width="1"/>
<rect x="45" y="272" width="174.6" height="32" fill="none" stroke="#fff" stroke-width="2"/>
<rect x="45" y="272" width="174.6" height="32" fill="none" stroke="#217346" stroke-width="2" stroke-dasharray="9.5 3"/>
<rect x="217.60000000000002" y="269.2" width="4.4" height="4.4" fill="#4472c4"/>
<rect x="217.60000000000002" y="302.2" width="4.4" height="4.4" fill="#4472c4"/>
<rect x="43.0" y="269.2" width="4.4" height="4.4" fill="#4472c4"/>
<rect x="43.0" y="302.2" width="4.4" height="4.4" fill="#4472c4"/>
<rect x="42" y="271" width="3" height="34" fill="#217346"/>
<rect x="1015.5" y="210.5" width="14" height="14" fill="#fff" stroke="#ababab"/>
<path d="M1019 219.5 L1022.5 215.6 L1026 219.5 Z" fill="#777"/>
<rect x="1015" y="225" width="15" height="439" fill="#d9d9d9"/>
<rect x="1015.5" y="225.5" width="14" height="283" fill="#fff" stroke="#ababab"/>
<rect x="1015.5" y="663.5" width="14" height="13.5" fill="#fff" stroke="#ababab"/>
<path d="M1019 668.4 L1022.5 672.4 L1026 668.4 Z" fill="#555"/></svg>
<span id="t56" class="t" style="top:213.72px;font-size:21.6px;color:#262626;left:119.00px;transform-origin:0 50%;width:24px;text-align:center;">A</span>
<span id="t57" class="t" style="top:213.72px;font-size:21.6px;color:#262626;left:260.00px;transform-origin:0 50%;width:24px;text-align:center;">B</span>
<span id="t58" class="t" style="top:213.72px;font-size:21.6px;color:#262626;left:366.00px;transform-origin:0 50%;width:24px;text-align:center;">C</span>
<span id="t59" class="t" style="top:213.72px;font-size:21.6px;color:#217346;left:489.00px;transform-origin:0 50%;width:24px;text-align:center;">D</span>
<span id="t60" class="t" style="top:213.72px;font-size:21.6px;color:#262626;left:625.00px;transform-origin:0 50%;width:24px;text-align:center;">E</span>
<span id="t61" class="t" style="top:213.72px;font-size:21.6px;color:#262626;left:757.00px;transform-origin:0 50%;width:24px;text-align:center;">F</span>
<span id="t62" class="t" style="top:213.72px;font-size:21.6px;color:#262626;left:874.00px;transform-origin:0 50%;width:24px;text-align:center;">G</span>
<span id="t63" class="t" style="top:213.72px;font-size:21.6px;color:#262626;left:981.00px;transform-origin:0 50%;width:24px;text-align:center;">H</span>
<span id="t64" class="t" style="top:246.12px;font-size:21.6px;color:#262626;left:3.00px;transform-origin:0 50%;width:38px;text-align:center;letter-spacing:-0.6px;">1</span>
<span id="t65" class="t" style="top:279.12px;font-size:21.6px;color:#217346;left:3.00px;transform-origin:0 50%;width:38px;text-align:center;letter-spacing:-0.6px;">2</span>
<span id="t66" class="t" style="top:312.12px;font-size:21.6px;color:#262626;left:3.00px;transform-origin:0 50%;width:38px;text-align:center;letter-spacing:-0.6px;">3</span>
<span id="t67" class="t" style="top:345.12px;font-size:21.6px;color:#262626;left:3.00px;transform-origin:0 50%;width:38px;text-align:center;letter-spacing:-0.6px;">4</span>
<span id="t68" class="t" style="top:378.12px;font-size:21.6px;color:#262626;left:3.00px;transform-origin:0 50%;width:38px;text-align:center;letter-spacing:-0.6px;">5</span>
<span id="t69" class="t" style="top:411.12px;font-size:21.6px;color:#262626;left:3.00px;transform-origin:0 50%;width:38px;text-align:center;letter-spacing:-0.6px;">6</span>
<span id="t70" class="t" style="top:444.12px;font-size:21.6px;color:#262626;left:3.00px;transform-origin:0 50%;width:38px;text-align:center;letter-spacing:-0.6px;">7</span>
<span id="t71" class="t" style="top:477.12px;font-size:21.6px;color:#262626;left:3.00px;transform-origin:0 50%;width:38px;text-align:center;letter-spacing:-0.6px;">8</span>
<span id="t72" class="t" style="top:510.12px;font-size:21.6px;color:#262626;left:3.00px;transform-origin:0 50%;width:38px;text-align:center;letter-spacing:-0.6px;">9</span>
<span id="t73" class="t" style="top:543.12px;font-size:21.6px;color:#262626;left:3.00px;transform-origin:0 50%;width:38px;text-align:center;letter-spacing:-0.6px;">10</span>
<span id="t74" class="t" style="top:576.12px;font-size:21.6px;color:#262626;left:3.00px;transform-origin:0 50%;width:38px;text-align:center;letter-spacing:-0.6px;">11</span>
<span id="t75" class="t" style="top:609.12px;font-size:21.6px;color:#262626;left:3.00px;transform-origin:0 50%;width:38px;text-align:center;letter-spacing:-0.6px;">12</span>
<span id="t76" class="t" style="top:642.12px;font-size:21.6px;color:#262626;left:3.00px;transform-origin:0 50%;width:38px;text-align:center;letter-spacing:-0.6px;">13</span>
<span id="t77" class="t" style="top:247.05px;font-size:20.5px;color:#000;font-weight:700;left:48.40px;transform-origin:0 50%;transform:scaleX(1.0443);">Months</span>
<span id="t78" class="t" style="top:247.05px;font-size:20.5px;color:#000;font-weight:700;left:223.80px;transform-origin:0 50%;transform:scaleX(0.9633);">Earnings</span>
<span id="t79" class="t" style="top:247.05px;font-size:20.5px;color:#000;font-weight:700;left:436.30px;transform-origin:0 50%;transform:scaleX(0.9107);">UPPERCASE</span>
<span id="t80" class="t" style="top:247.05px;font-size:20.5px;color:#000;font-weight:700;left:575.40px;transform-origin:0 50%;transform:scaleX(0.9944);">lowercase</span>
<span id="t81" class="t" style="top:247.05px;font-size:20.5px;color:#000;font-weight:700;left:708.80px;transform-origin:0 50%;transform:scaleX(0.9886);">Proper Case</span>
<span id="t82" class="t" style="top:282.50px;font-size:17.6px;color:#000;left:46.80px;transform-origin:0 50%;transform:scaleX(1.0193);">January</span>
<span id="t83" class="t" style="top:282.50px;font-size:17.6px;color:#000;left:262.70px;transform-origin:0 50%;transform:scaleX(1.0085);">$1, 000</span>
<span id="t84" class="t" style="top:315.50px;font-size:17.6px;color:#000;left:47.80px;transform-origin:0 50%;transform:scaleX(1.0354);">February</span>
<span id="t85" class="t" style="top:315.50px;font-size:17.6px;color:#000;left:276.60px;transform-origin:0 50%;transform:scaleX(0.9964);">$900</span>
<span id="t86" class="t" style="top:348.50px;font-size:17.6px;color:#000;left:47.80px;transform-origin:0 50%;transform:scaleX(1.0472);">March</span>
<span id="t87" class="t" style="top:348.50px;font-size:17.6px;color:#000;left:261.50px;transform-origin:0 50%;transform:scaleX(1.0053);">$1,200</span>
<span id="t88" class="t" style="top:381.50px;font-size:17.6px;color:#000;left:47.80px;transform-origin:0 50%;transform:scaleX(1.0993);">April</span>
<span id="t89" class="t" style="top:381.50px;font-size:17.6px;color:#000;left:261.50px;transform-origin:0 50%;transform:scaleX(1.0053);">$1,400</span>
<span id="t90" class="t" style="top:414.50px;font-size:17.6px;color:#000;left:47.80px;transform-origin:0 50%;transform:scaleX(1.0586);">May</span>
<span id="t91" class="t" style="top:414.50px;font-size:17.6px;color:#000;left:261.50px;transform-origin:0 50%;transform:scaleX(1.0053);">$1,050</span>
<span id="t92" class="t" style="top:447.50px;font-size:17.6px;color:#000;left:47.80px;transform-origin:0 50%;transform:scaleX(0.9618);">June</span>
<span id="t93" class="t" style="top:447.50px;font-size:17.6px;color:#000;left:276.60px;transform-origin:0 50%;transform:scaleX(0.9964);">$850</span>
<span id="t94" class="t" style="top:480.50px;font-size:17.6px;color:#000;left:47.80px;transform-origin:0 50%;transform:scaleX(0.9650);">July</span>
<span id="t95" class="t" style="top:480.50px;font-size:17.6px;color:#000;left:261.50px;transform-origin:0 50%;transform:scaleX(1.0053);">$2,000</span>
<span id="t96" class="t" style="top:513.50px;font-size:17.6px;color:#000;left:47.80px;transform-origin:0 50%;transform:scaleX(1.0369);">August</span>
<span id="t97" class="t" style="top:513.50px;font-size:17.6px;color:#000;left:261.50px;transform-origin:0 50%;transform:scaleX(1.0302);">$2,011</span>
<span id="t98" class="t" style="top:546.50px;font-size:17.6px;color:#000;left:47.80px;transform-origin:0 50%;transform:scaleX(1.0399);">September</span>
<span id="t99" class="t" style="top:546.50px;font-size:17.6px;color:#000;left:262.70px;transform-origin:0 50%;transform:scaleX(1.0085);">$1, 000</span>
<span id="t100" class="t" style="top:579.50px;font-size:17.6px;color:#000;left:47.80px;transform-origin:0 50%;transform:scaleX(1.0416);">October</span>
<span id="t101" class="t" style="top:579.50px;font-size:17.6px;color:#000;left:261.50px;transform-origin:0 50%;transform:scaleX(1.0053);">$1,050</span>
<span id="t102" class="t" style="top:612.50px;font-size:17.6px;color:#000;left:47.80px;transform-origin:0 50%;transform:scaleX(1.0496);">November</span>
<span id="t103" class="t" style="top:612.50px;font-size:17.6px;color:#000;left:261.50px;transform-origin:0 50%;transform:scaleX(1.0053);">$5,000</span>
<span id="t104" class="t" style="top:645.50px;font-size:17.6px;color:#000;left:47.80px;transform-origin:0 50%;transform:scaleX(1.0090);">December</span>
<span id="t105" class="t" style="top:645.50px;font-size:17.6px;color:#000;left:261.50px;transform-origin:0 50%;transform:scaleX(1.0053);">$1,400</span>
<span id="t106" class="t" style="top:280.50px;font-size:20.2px;color:#000;left:435.00px;transform-origin:0 50%;transform:scaleX(0.9333);">=UPPER(</span>
<span id="t107" class="t" style="top:280.50px;font-size:20.2px;color:#4472c4;left:518.80px;transform-origin:0 50%;transform:scaleX(1.0120);">A2</span>
<div class="tip"></div>
<span id="t108" class="t" style="top:310.05px;font-size:11.4px;color:#605e5c;left:453.50px;transform-origin:0 50%;transform:scaleX(0.9864);">UPPER(<b>text</b>)</span>
</div>
<div class="sheetbar">
<div class="tab2"></div>
<svg class="ov" style="top:0" width="1034" height="728" viewBox="0 0 1034 728" fill="none">
<path d="M32.4 686.4 L28.4 690.4 L32.4 694.4 Z" fill="#c0c0c0"/>
<path d="M56.6 686.4 L60.6 690.4 L56.6 694.4 Z" fill="#c0c0c0"/>
<path d="M101.5 681 V701" stroke="#ababab"/>
<circle cx="271.8" cy="690.8" r="7.6" stroke="#666" stroke-width="1.2"/>
<path d="M267.6 690.8 H276 M271.8 686.6 V695" stroke="#666" stroke-width="1.4"/>
<g fill="#a6a6a6"><rect x="620.2" y="685.6" width="1.6" height="1.6"/><rect x="620.2" y="690" width="1.6" height="1.6"/><rect x="620.2" y="694.4" width="1.6" height="1.6"/></g>
<rect x="637" y="684.5" width="375" height="14.5" fill="#d9d9d9"/>
<rect x="637.5" y="685" width="14" height="13.5" fill="#fff" stroke="#ababab"/>
<rect x="651.5" y="685" width="301" height="13.5" fill="#fff" stroke="#ababab"/>
<rect x="997.5" y="685" width="14" height="13.5" fill="#fff" stroke="#ababab"/>
<path d="M646.6 688 L642.4 691.6 L646.6 695.2 Z" fill="#606060"/>
<path d="M1003 688 L1007.3 691.6 L1003 695.2 Z" fill="#606060"/>
</svg>
<span id="t109" class="t" style="top:684.85px;font-size:12.7px;color:#444;left:114.00px;transform-origin:0 50%;transform:scaleX(0.9448);">Sheet1</span>
<span id="t110" class="t" style="top:684.85px;font-size:12.7px;color:#217346;font-weight:700;left:178.00px;transform-origin:0 50%;transform:scaleX(0.9661);">Sheet2</span>
</div>
<div class="status">
<svg class="ov" style="top:0" width="1034" height="728" viewBox="0 0 1034 728" fill="none" stroke="#8a8886">
<circle cx="184.6" cy="710.8" r="1.8" stroke="#605e5c" stroke-width="1.1"/>
<path d="M178.8 713.6 C181 712.8 183 714 184.6 714 C186.2 714 188.4 712.8 190.6 713.6 M182.4 714.4 V718 L179.8 722.2 M186.8 714.4 V717" stroke="#605e5c" stroke-width="1.1"/>
<path d="M186.6 717.6 L191.6 722.6 M191.6 717.6 L186.6 722.6" stroke="#605e5c" stroke-width="1.1"/>
<rect x="735.5" y="709.5" width="12" height="12"/><path d="M735.5 713.5 H747.5 M735.5 717.5 H747.5 M739.5 709.5 V721.5 M743.5 709.5 V721.5"/>
<rect x="775.5" y="709.5" width="12" height="12"/><rect x="778.5" y="712.5" width="6" height="7"/><path d="M779.5 714.5 H783.5 M779.5 716.5 H783.5"/>
<path d="M815.5 721.5 V709.5 H827.5 V721.5 M815.5 717.5 H823.5 V709.5 M819.5 709.5 V717.5"/>
<path d="M848.5 716.5 H856" stroke="#a6a6a6"/>
<path d="M861 716.5 H960.5" stroke="#444"/>
<path d="M911 712 V721.5" stroke="#444" stroke-width="1.6"/>
<path d="M965.6 716 H973.8 M969.7 712 V720" stroke="#a0a0a0" stroke-width="1.1"/>
</svg>
<span id="t111" class="t" style="top:711.10px;font-size:11.1px;color:#444;left:9.20px;transform-origin:0 50%;transform:scaleX(1.0397);">Point</span>
<span id="t112" class="t" style="top:711.80px;font-size:11.1px;color:#444;left:55.00px;transform-origin:0 50%;transform:scaleX(1.0492);">Workbook Statistics</span>
<span id="t113" class="t" style="top:711.10px;font-size:11.1px;color:#444;left:196.30px;transform-origin:0 50%;transform:scaleX(1.0147);">Accessibility: Investigate</span>
<span id="t114" class="t" style="top:711.10px;font-size:11.1px;color:#a19f9d;left:987.00px;transform-origin:0 50%;transform:scaleX(0.9692);">166%</span>
</div>
<div class="anno">
<svg class="ov" style="top:0" width="1034" height="728" viewBox="0 0 1034 728"><path d="M709.0 290.7 L561.8 290.7" stroke="#000" stroke-width="3" fill="none"/><path d="M549.3 290.7 L566.3 284.7 L561.8 290.7 L566.3 296.7 Z" fill="#000"/>
<path d="M652.6 485.3 L518.6 310.6" stroke="#000" stroke-width="3" fill="none"/><path d="M511.0 300.7 L526.1 310.5 L518.6 310.6 L516.6 317.8 Z" fill="#000"/>
<path d="M400.0 547.0 L227.9 316.4" stroke="#000" stroke-width="3" fill="none"/><path d="M220.4 306.4 L235.4 316.4 L227.9 316.4 L225.8 323.6 Z" fill="#000"/>
<circle cx="749.8" cy="463" r="18" fill="#000"/>
<circle cx="571" cy="536.5" r="17.7" fill="#000"/>
<circle cx="860" cy="263.3" r="17.7" fill="#000"/></svg>
<span id="t115" class="t" style="top:452.95px;font-size:22.5px;color:#fff;font-weight:700;left:744.60px;transform-origin:0 50%;">1</span>
<span id="t116" class="t" style="top:526.25px;font-size:22.5px;color:#fff;font-weight:700;left:564.90px;transform-origin:0 50%;">2</span>
<span id="t117" class="t" style="top:253.05px;font-size:22.5px;color:#fff;font-weight:700;left:854.00px;transform-origin:0 50%;">3</span>
<span id="t118" class="t an" style="top:276.80px;font-size:25.4px;color:#000;font-weight:700;left:714.00px;transform-origin:0 50%;transform:scaleX(1.0509);">Cell address added</span>
<span id="t119" class="t an" style="top:480.40px;font-size:25.4px;color:#000;font-weight:700;left:658.40px;transform-origin:0 50%;transform:scaleX(1.0511);">Type in: UPPER(</span>
<span id="t120" class="t an" style="top:551.24px;font-size:25px;color:#000;font-weight:700;left:390.00px;transform-origin:0 50%;transform:scaleX(1.0698);">Click the cell that you want to</span>
<span id="t121" class="t an" style="top:587.94px;font-size:25px;color:#000;font-weight:700;left:356.00px;transform-origin:0 50%;transform:scaleX(1.0949);">convert the textcase to uppercase</span>
</div>
<div class="frame"></div>
</div></body></html>
